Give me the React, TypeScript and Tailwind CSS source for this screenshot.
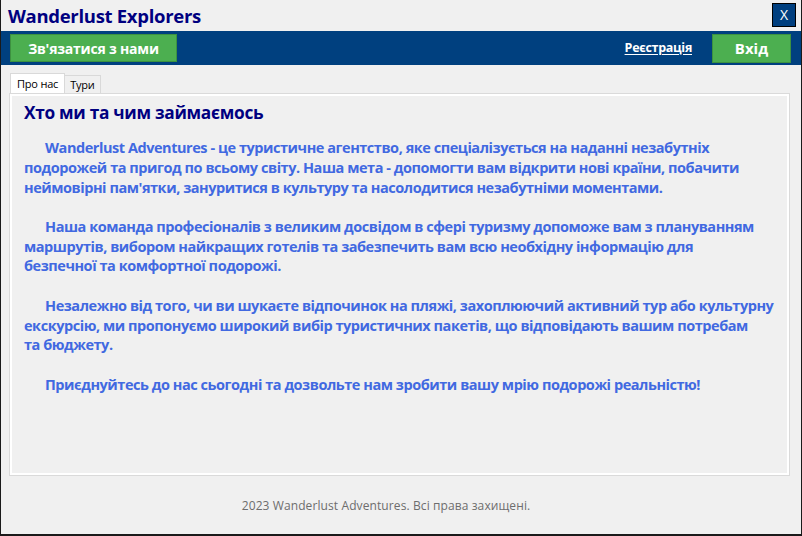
import { useState } from 'react';

const paragraphs = [
  [
    'Wanderlust Adventures - це туристичне агентство, яке спеціалізується на наданні незабутніх',
    'подорожей та пригод по всьому світу. Наша мета - допомогти вам відкрити нові країни, побачити',
    'неймовірні пам\'ятки, зануритися в культуру та насолодитися незабутніми моментами.',
  ],
  [
    'Наша команда професіоналів з великим досвідом в сфері туризму допоможе вам з плануванням',
    'маршрутів, вибором найкращих готелів та забезпечить вам всю необхідну інформацію для',
    'безпечної та комфортної подорожі.',
  ],
  [
    'Незалежно від того, чи ви шукаєте відпочинок на пляжі, захоплюючий активний тур або культурну',
    'екскурсію, ми пропонуємо широкий вибір туристичних пакетів, що відповідають вашим потребам',
    'та бюджету.',
  ],
  ['Приєднуйтесь до нас сьогодні та дозвольте нам зробити вашу мрію подорожі реальністю!'],
];

export default function App() {
  const [tab, setTab] = useState<'about' | 'tours'>('about');

  return (
    <div className="w-[802px] h-[536px] bg-[#1a1a1a] overflow-hidden font-['Open_Sans',sans-serif]">
      <div className="w-[800px] h-[534px] ml-px bg-[#f0f0f0] flex flex-col">
        {/* title row */}
        <div className="h-[31px] flex items-start justify-between pl-[7px] pr-[5px]">
          <h1 className="mt-[3px] text-[18.5px] leading-[26px] font-bold text-[#000080] tracking-[-0.3px]">Wanderlust Explorers</h1>
          <button className="mt-[3px] w-[24px] h-[24px] bg-[#003f7f] border border-black text-white text-[14px] leading-none flex items-center justify-center">X</button>
        </div>

        {/* nav bar */}
        <div className="h-[35px] bg-[#00407f] flex items-center justify-between pl-[9px] pr-[10px]">
          <button className="w-[167px] h-[28px] bg-[#4caf50] border border-[#3d9140] text-white text-[14px] font-bold tracking-[-0.2px]">Зв'язатися з нами</button>
          <div className="flex items-center gap-[20px]">
            <a className="text-white text-[12.5px] font-bold underline underline-offset-2 tracking-[-0.3px] cursor-pointer">Реєстрація</a>
            <button className="w-[79px] h-[29px] bg-[#4caf50] border border-[#3d9140] text-white text-[15px] font-bold">Вхід</button>
          </div>
        </div>

        {/* tabs */}
        <div className="flex-1 flex flex-col px-[8px] pt-[8px]">
          <div className="flex items-end h-[20px] pl-px">
            <div
              onClick={() => setTab('about')}
              className={`h-[20px] px-[6px] text-[11px] leading-[19px] tracking-[-0.2px] text-black bg-[#f0f0f0] border border-b-0 border-[#d9d9d9] cursor-pointer ${tab === 'about' ? 'z-10 bg-white' : ''}`}
            >
              Про нас
            </div>
            <div
              onClick={() => setTab('tours')}
              className="h-[18px] px-[5px] text-[11px] leading-[18px] tracking-[-0.2px] text-black bg-[#f0f0f0] border border-b-0 border-l-0 border-[#d9d9d9] cursor-pointer"
            >
              Тури
            </div>
          </div>
          <div className="h-[383px] mr-[3px] border border-[#dadada] bg-white p-[2px]">
            <div className="h-full bg-[#f0f0f0] pl-[12px] pt-[6px]">
              {tab === 'about' ? (
                <>
                  <h2 className="text-[17.3px] leading-[22px] font-bold text-[#000080] tracking-[-0.3px]">Хто ми та чим займаємось</h2>
                  <div className="mt-[14px] flex flex-col gap-[20px] text-[14.5px] leading-[19.6px] font-bold text-[#4169e1] tracking-[-0.45px]">
                    {paragraphs.map((p, i) => (
                      <p key={i} className="whitespace-nowrap">
                        {p.map((line, j) => (
                          <span key={j} className={`block ${j === 0 ? 'pl-[21px]' : ''}`}>{line}</span>
                        ))}
                      </p>
                    ))}
                  </div>
                </>
              ) : (
                <p className="text-[14px] text-[#000080]">Тури</p>
              )}
            </div>
          </div>
        </div>

        {/* footer */}
        <div className="h-[58px] flex items-start justify-center pt-[21px] pr-[30px]">
          <p className="text-[12px] tracking-[0.1px] text-[#6d6d6d]">2023 Wanderlust Adventures. Всі права захищені.</p>
        </div>
      </div>
    </div>
  );
}
